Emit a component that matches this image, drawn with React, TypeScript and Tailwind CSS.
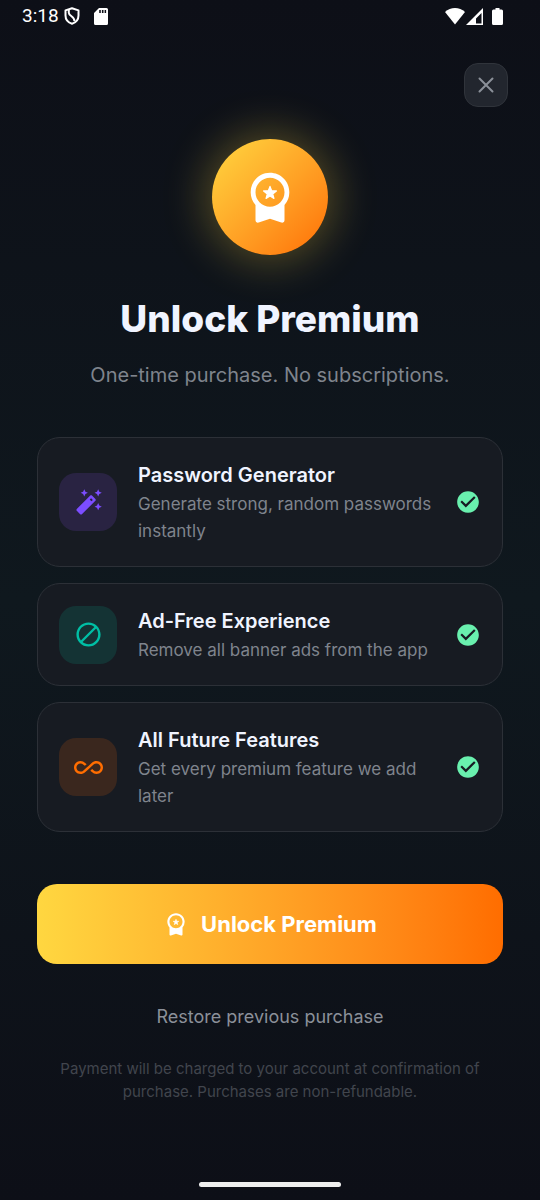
import type { ReactNode } from 'react';
import { MdAllInclusive, MdCheckCircle, MdDoNotDisturbAlt } from 'react-icons/md';

interface Feature {
  title: string;
  description: string;
  icon: ReactNode;
  iconClass: string;
}

function WandIcon({ className }: { className: string }) {
  return (
    <svg viewBox="0 0 24 24" fill="currentColor" className={className} aria-hidden="true">
      <path d="M20 7l.94-2.06L23 4l-2.06-.94L20 1l-.94 2.06L17 4l2.06.94zM8.5 7l.94-2.06L11.5 4l-2.06-.94L8.5 1l-.94 2.06L5.5 4l2.06.94zM20 12.5l-.94 2.06-2.06.94 2.06.94.94 2.06.94-2.06L23 15.5l-2.06-.94z" />
      <path
        fillRule="evenodd"
        d="M17.71 9.12l-2.83-2.83C14.68 6.1 14.43 6 14.17 6s-.51.1-.71.29L2.29 17.46c-.39.39-.39 1.02 0 1.41l2.83 2.83c.2.2.45.3.71.3s.51-.1.71-.29l11.17-11.17c.39-.39.39-1.03 0-1.42zm-3.54-.7l1.41 1.41L14.41 11 13 9.59z"
      />
    </svg>
  );
}

const FEATURES: Feature[] = [
  {
    title: 'Password Generator',
    description: 'Generate strong, random passwords instantly',
    icon: <WandIcon className="w-[29px] h-[29px]" />,
    iconClass: 'bg-[#292342] text-[#7c4dff]',
  },
  {
    title: 'Ad-Free Experience',
    description: 'Remove all banner ads from the app',
    icon: <MdDoNotDisturbAlt className="w-[29px] h-[29px]" />,
    iconClass: 'bg-[#143334] text-[#00bfa5]',
  },
  {
    title: 'All Future Features',
    description: 'Get every premium feature we add later',
    icon: <MdAllInclusive className="w-[29px] h-[29px]" />,
    iconClass: 'bg-[#3a271e] text-[#ff6d00]',
  },
];

function PremiumIcon({ className }: { className: string }) {
  return (
    <svg viewBox="0 0 24 24" fill="currentColor" className={className} aria-hidden="true">
      <path
        fillRule="evenodd"
        d="M20 10c0-4.42-3.58-8-8-8s-8 3.58-8 8c0 2.03.76 3.87 2 5.28v6.33c0 .69.67 1.17 1.32.95L12 21l4.68 1.56c.65.22 1.32-.26 1.32-.95v-6.33A7.96 7.96 0 0 0 20 10zm-8-6c3.31 0 6 2.69 6 6s-2.69 6-6 6-6-2.69-6-6 2.69-6 6-6z"
      />
      <path
        d="M12 7.6l.68 1.8 1.97.1-1.53 1.22.51 1.88L12 11.55l-1.63 1.05.51-1.88L9.35 9.5l1.97-.1z"
        stroke="currentColor"
        strokeWidth="0.5"
        strokeLinejoin="round"
      />
    </svg>
  );
}

function StatusBar() {
  return (
    <div className="flex items-center justify-between h-8 pl-[22px] pr-[37px] text-white">
      <div className="flex items-center">
        <span className="font-['Roboto',sans-serif] text-[19px] leading-8">3:18</span>
        <svg viewBox="0 0 16 18" fill="none" stroke="currentColor" strokeWidth="2" strokeLinejoin="round" className="w-4 h-[18px] ml-[5px]" aria-hidden="true">
          <path d="M8 1.2 1.5 3.4v5c0 4 2.7 7 6.5 8.3 3.8-1.3 6.5-4.3 6.5-8.3v-5z" />
          <path d="M4.8 3v2.7c0 1.5 1 2.4 2.7 3.6 2 1.4 3 2.5 3 5" />
        </svg>
        <svg viewBox="0 0 14 17" fill="currentColor" className="w-[14px] h-[17px] ml-[14px]" aria-hidden="true">
          <path
            fillRule="evenodd"
            d="M5 0h7.5A1.5 1.5 0 0 1 14 1.5v14a1.5 1.5 0 0 1-1.5 1.5h-11A1.5 1.5 0 0 1 0 15.5V5zM5.2 2v3h1.6V2zm2.7 0v3h1.6V2zm2.7 0v3h1.5V2z"
          />
        </svg>
      </div>
      <div className="flex items-center">
        <svg viewBox="0 0 20 17" fill="currentColor" className="w-5 h-[17px]" aria-hidden="true">
          <path d="M0 4C5.5-1.3 14.5-1.3 20 4L10 16.500z" />
        </svg>
        <svg viewBox="0 0 17 17" fill="currentColor" className="w-[17px] h-[17px] ml-px" aria-hidden="true">
          <path fillRule="evenodd" d="M17 0v17H0zM15.500 5l-5.500 5.500V15.500h5.500z" />
        </svg>
        <svg viewBox="0 0 11 17" fill="currentColor" className="w-[11px] h-[17px] ml-[9px]" aria-hidden="true">
          <path d="M3.5 0h4v1.5h2A1.5 1.5 0 0 1 11 3v12.5A1.5 1.5 0 0 1 9.5 17h-8A1.5 1.5 0 0 1 0 15.5V3a1.5 1.5 0 0 1 1.5-1.5h2z" />
        </svg>
      </div>
    </div>
  );
}

function FeatureCard({ feature }: { feature: Feature }) {
  return (
    <li className="flex items-center p-[21px] rounded-[23px] border border-[#2c3037] bg-[#171b22]">
      <div className={`flex items-center justify-center shrink-0 w-[58px] h-[58px] rounded-[17px] ${feature.iconClass}`}>
        {feature.icon}
      </div>
      <div className="flex-1 min-w-0 ml-[21px]">
        <h2 className="text-[20px] leading-8 font-semibold text-[#f0f4ff]">{feature.title}</h2>
        <p className="text-[17px] leading-[27px] text-[#7f848d]">{feature.description}</p>
      </div>
      <MdCheckCircle className="shrink-0 w-[26px] h-[26px] ml-3 text-[#69f0ae]" />
    </li>
  );
}

export default function App() {
  return (
    <div className="flex flex-col min-h-screen bg-linear-to-b from-[#0d0f17] via-[#0f181e] to-[#0d0f17] font-['Inter',sans-serif]">
      <StatusBar />

      <main className="flex flex-col flex-1 px-[37px]">
        <div className="flex justify-end -mr-[5px] pt-[31px]">
          <button
            type="button"
            aria-label="Close"
            className="flex items-center justify-center w-11 h-11 rounded-[14px] border border-[#30343b] bg-[#22262e] text-[#8b9099]"
          >
            <svg viewBox="0 0 26 26" fill="none" stroke="currentColor" strokeWidth="2" strokeLinecap="round" className="w-[26px] h-[26px]" aria-hidden="true">
              <path d="M6.5 6.5l13 13M19.5 6.5l-13 13" />
            </svg>
          </button>
        </div>

        <div className="flex items-center justify-center self-center w-[116px] h-[116px] mt-8 rounded-full bg-linear-to-br from-[#ffd740] to-[#ff6d00] text-white shadow-[0_0_44px_6px_rgba(255,215,64,0.3)]">
          <PremiumIcon className="w-[58px] h-[58px]" />
        </div>

        <h1 className="mt-10 text-center text-[37px] leading-12 font-extrabold text-[#f0f4ff]">Unlock Premium</h1>
        <p className="mt-4 text-center text-[20px] leading-8 text-[#7f848d]">One-time purchase. No subscriptions.</p>

        <ul className="flex flex-col gap-4 mt-[46px]">
          {FEATURES.map((feature) => (
            <FeatureCard key={feature.title} feature={feature} />
          ))}
        </ul>

        <button
          type="button"
          className="flex items-center justify-center gap-3 w-full h-20 mt-[52px] rounded-[20px] bg-linear-to-r from-[#ffd740] to-[#ff6d00] text-[22px] font-bold text-white"
        >
          <PremiumIcon className="w-[26px] h-[26px]" />
          Unlock Premium
        </button>

        <button type="button" className="self-center mt-[37px] text-[18px] leading-8 text-[#8b9099]">
          Restore previous purchase
        </button>

        <p className="mt-6 px-4 text-center text-[15px] leading-[23px] text-[#41454d]">
          Payment will be charged to your account at confirmation of purchase. Purchases are non-refundable.
        </p>
      </main>

      <div className="self-center w-[142px] h-[5px] mt-6 mb-[13px] rounded-full bg-[#eeeeee]" />
    </div>
  );
}
